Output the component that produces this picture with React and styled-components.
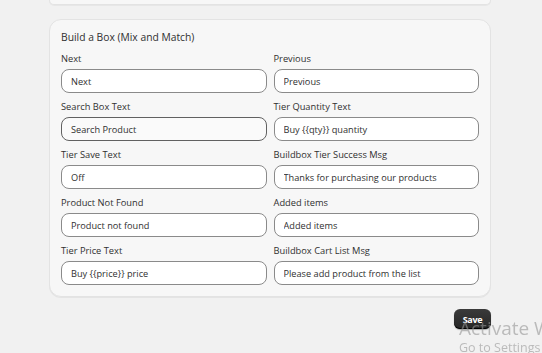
import React from "react";
import styled, { createGlobalStyle } from "styled-components";

const fields = [
  { label: "Next", value: "Next" },
  { label: "Previous", value: "Previous" },
  { label: "Search Box Text", value: "Search Product", hover: true },
  { label: "Tier Quantity Text", value: "Buy {{qty}} quantity" },
  { label: "Tier Save Text", value: "Off" },
  { label: "Buildbox Tier Success Msg", value: "Thanks for purchasing our products" },
  { label: "Product Not Found", value: "Product not found" },
  { label: "Added items", value: "Added items" },
  { label: "Tier Price Text", value: "Buy {{price}} price" },
  { label: "Buildbox Cart List Msg", value: "Please add product from the list" },
];

function App() {
  return (
    <>
      <GlobalStyle />
      <Page>
        <PrevCard />
        <Card>
          <CardTitle>Build a Box (Mix and Match)</CardTitle>
          <FieldGrid>
            {fields.map((f) => (
              <Field key={f.label}>
                <Label>{f.label}</Label>
                <Input $hover={f.hover} defaultValue={f.value} readOnly />
              </Field>
            ))}
          </FieldGrid>
        </Card>
        <Actions>
          <SaveButton>Save</SaveButton>
        </Actions>
      </Page>
      <Watermark>
        <WatermarkHead>Activate Windows</WatermarkHead>
        <WatermarkSub>Go to Settings to activate Windows.</WatermarkSub>
      </Watermark>
    </>
  );
}

const GlobalStyle = createGlobalStyle`
  html, body {
    margin: 0;
    padding: 0;
    background: #f1f1f1;
    overflow: hidden;
  }
  body {
    font-family: "Open Sans", "Noto Sans", sans-serif;
    color: #303030;
    width: 542px;
    height: 353px;
  }
`;

const Page = styled.div`
  width: 442px;
  margin-left: 49px;
  display: flex;
  flex-direction: column;
`;

const PrevCard = styled.div`
  height: 4px;
  background: #f7f7f7;
  border: 1px solid #e3e3e3;
  border-top: none;
  border-radius: 0 0 12px 12px;
  box-shadow: 0 1px 0 rgba(0, 0, 0, 0.04);
`;

const Card = styled.div`
  margin-top: 14px;
  background: #f7f7f7;
  border: 1px solid #e3e3e3;
  border-radius: 12px;
  padding: 10px 11px 11px 11px;
  box-shadow: 0 1px 0 rgba(0, 0, 0, 0.05);
`;

const CardTitle = styled.div`
  font-size: 10.3px;
  font-weight: 500;
  line-height: 14px;
  margin-bottom: 8px;
`;

const FieldGrid = styled.div`
  display: grid;
  grid-template-columns: 1fr 1fr;
  column-gap: 7px;
  row-gap: 7px;
`;

const Field = styled.div`
  display: flex;
  flex-direction: column;
  gap: 3px;
`;

const Label = styled.label`
  font-size: 9.3px;
  line-height: 14px;
  color: #303030;
`;

const Input = styled.input`
  box-sizing: border-box;
  height: 24px;
  width: 100%;
  padding: 0 9px;
  border: 1px solid ${(p) => (p.$hover ? "#616161" : "#8a8a8a")};
  background: ${(p) => (p.$hover ? "#fafafa" : "#ffffff")};
  border-radius: 8px;
  font-family: inherit;
  font-size: 9.2px;
  color: #303030;
  outline: none;
`;

const Actions = styled.div`
  display: flex;
  justify-content: flex-end;
  margin-top: 12px;
`;

const SaveButton = styled.button`
  height: 20px;
  width: 37px;
  padding: 0;
  border: none;
  border-radius: 6px;
  background: linear-gradient(#3a3a3a, #262626);
  box-shadow: inset 0 -1px 0 #000, 0 1px 1px rgba(0, 0, 0, 0.3);
  color: #fff;
  font-family: inherit;
  font-size: 9px;
  font-weight: 700;
  letter-spacing: -0.3px;
`;

const Watermark = styled.div`
  position: fixed;
  left: 459px;
  top: 316px;
  white-space: nowrap;
  color: rgba(150, 150, 150, 0.6);
  font-family: "Open Sans", "Noto Sans", sans-serif;
  pointer-events: none;
`;

const WatermarkHead = styled.div`
  font-size: 19px;
  line-height: 24px;
`;

const WatermarkSub = styled.div`
  font-size: 12.5px;
  line-height: 16px;
`;

export default App;
